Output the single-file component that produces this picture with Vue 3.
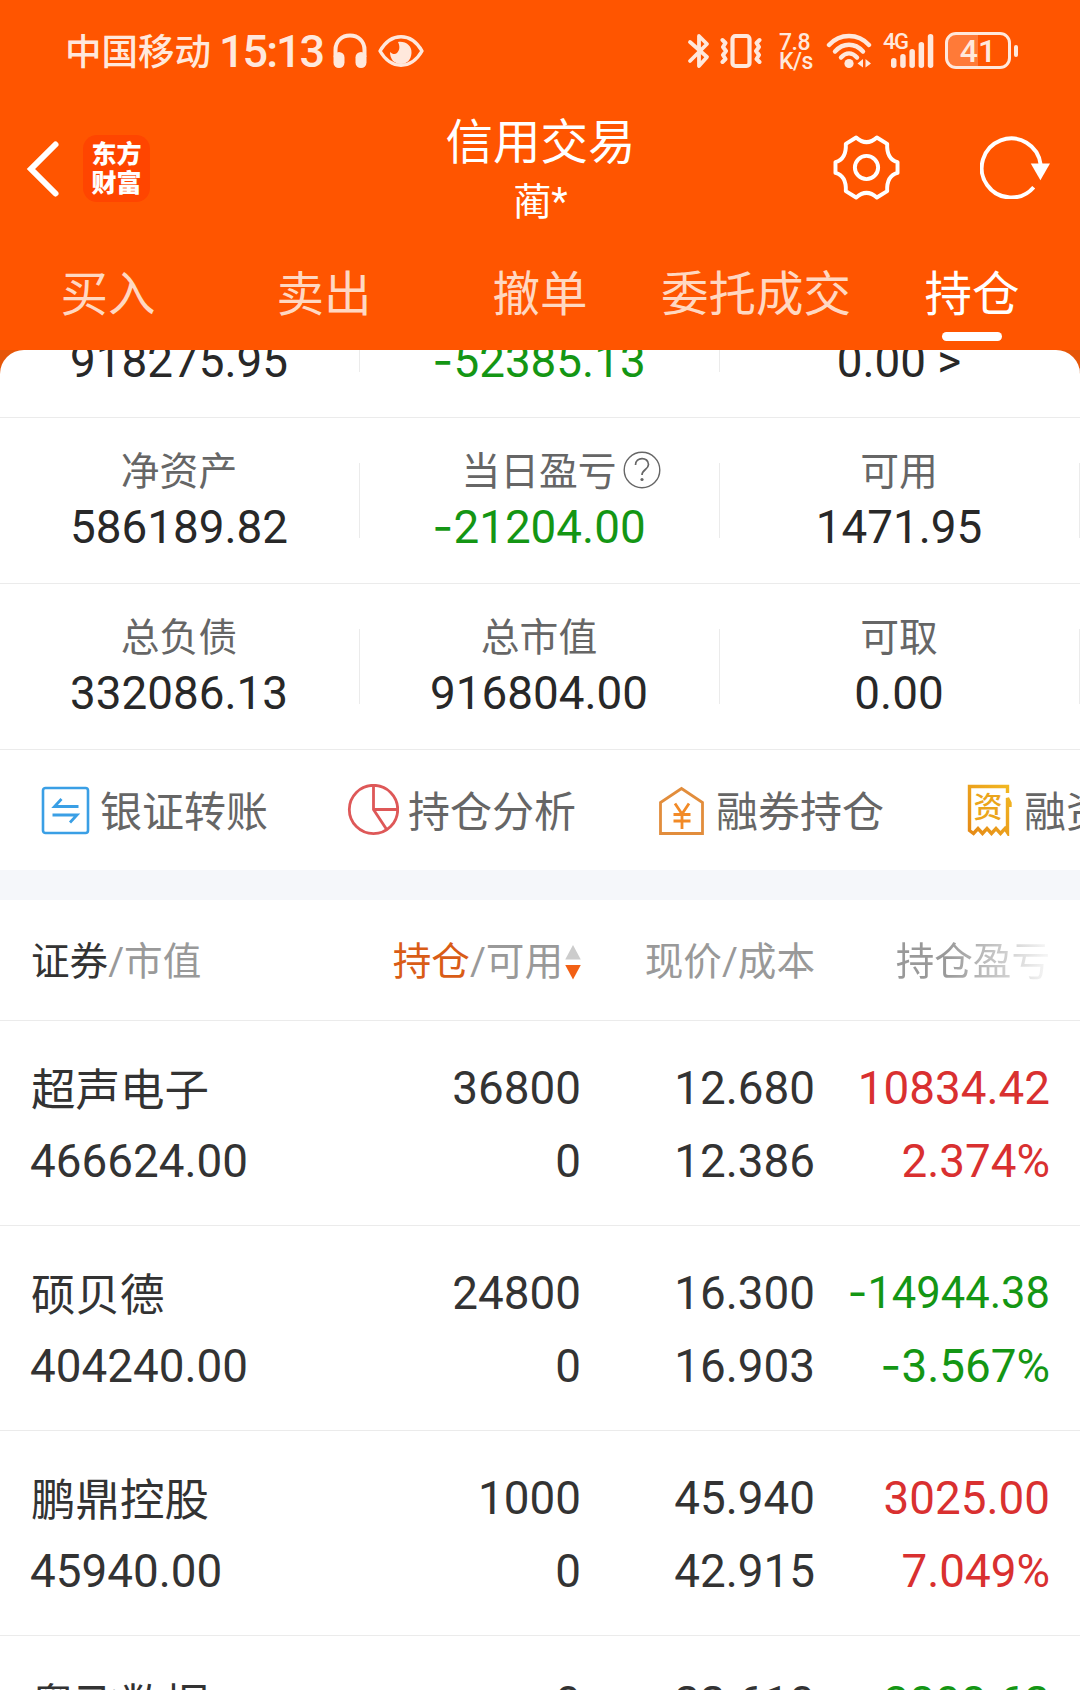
<template>
  <div class="page">
    <header class="header">
      <div class="status-bar">
        <span class="carrier">中国移动</span>
        <span class="clock">15:13</span>
        <svg class="headphones" viewBox="0 0 34 36">
          <path d="M2.500 24V17C2.500 8 9 2.500 17 2.500S31.500 8 31.500 17V24" fill="none" stroke="currentColor" stroke-width="4" />
          <rect x="0.500" y="19" width="11" height="16" rx="5.500" fill="currentColor" />
          <rect x="22.500" y="19" width="11" height="16" rx="5.500" fill="currentColor" />
        </svg>
        <svg class="eye" viewBox="0 0 46 32">
          <path d="M2 16C13 -3 33 -3 44 16C33 35 13 35 2 16Z" fill="none" stroke="currentColor" stroke-width="3.400" stroke-linejoin="round" />
          <path d="M20 7C28 6 34 11 33.500 18C33 25 29 29 23 29C16 29 12 24 12 17C14 19 17 20 19 18C22 15 22 11 20 7Z" fill="currentColor" />
        </svg>
        <div class="status-right">
          <svg class="bluetooth" viewBox="0 0 24 36">
            <path d="M3 9L20 24L12 33V3L20 11L3 28" fill="none" stroke="currentColor" stroke-width="3.800" stroke-linejoin="round" stroke-linecap="round" />
          </svg>
          <svg class="vibrate" viewBox="0 0 42 36">
            <rect x="12.500" y="3" width="17" height="30" rx="3" fill="none" stroke="currentColor" stroke-width="4.200" />
            <path d="M2.500 7L5.500 10L3 14L6 18L3 22L5.500 26L2.500 29M39.500 7L36.500 10L39 14L36 18L39 22L36.500 26L39.500 29" fill="none" stroke="currentColor" stroke-width="4" stroke-linejoin="round" stroke-linecap="round" />
          </svg>
          <span class="speed"><span>7.8</span><span>K/s</span></span>
          <svg class="wifi" viewBox="0 0 46 36">
            <g fill="none" stroke="currentColor" stroke-width="4.400" stroke-linecap="round">
              <path d="M3 12C14 0 32 0 43 12" />
              <path d="M9 18.500C17 9.500 29 9.500 37 18.500" />
              <path d="M15 24.500C20 19 26 19 31 24.500" />
            </g>
            <circle cx="23" cy="30.500" r="4.600" fill="currentColor" />
            <path d="M37 26V34.500L31.500 30.500ZM39.500 26V34.500L45 30.500Z" fill="currentColor" />
          </svg>
          <span class="signal">
            <span class="network">4G</span>
            <svg class="bars" viewBox="0 0 44 36">
              <rect x="1" y="25" width="5.500" height="10" rx="2.700" />
              <rect x="10.200" y="21" width="5.500" height="14" rx="2.700" />
              <rect x="19.400" y="16" width="5.500" height="19" rx="2.700" />
              <rect x="28.600" y="9" width="5.500" height="26" rx="2.700" />
              <rect x="37.800" y="1" width="5.500" height="34" rx="2.700" />
            </svg>
          </span>
          <span class="battery">41</span>
          <span class="battery-tip"></span>
        </div>
      </div>

      <div class="nav">
        <svg class="back" viewBox="0 0 34 58">
          <path d="M29.500 4.500L5 29L29.500 53.500" fill="none" stroke="#fff" stroke-width="6" stroke-linecap="round" stroke-linejoin="miter" />
        </svg>
        <div class="logo"><span>东方</span><span>财富</span></div>
        <div class="title">
          <h1>信用交易</h1>
          <p>蔺*</p>
        </div>
        <svg class="gear" viewBox="0 0 68 66">
          <g fill="none" stroke="#fff" stroke-width="4" stroke-linejoin="round">
            <path d="M23.500 2.500Q34 12 44.500 2.500L55 9C54.500 19 58 25.500 65.500 27.500V38.500C58 40.500 54.500 47 55 57L44.500 63.500Q34 54 23.500 63.500L13 57C13.500 47 10 40.500 2.500 38.500V27.500C10 25.500 13.500 19 13 9Z" />
            <circle cx="34" cy="33" r="11.800" />
          </g>
        </svg>
        <svg class="refresh" viewBox="0 0 72 66">
          <path d="M54.500 54A30 30 0 1 1 61.500 31" fill="none" stroke="#fff" stroke-width="4" />
          <path d="M51.500 30H71L61.300 47Z" fill="#fff" />
        </svg>
      </div>

      <nav class="tabs">
        <a v-for="tab in tabs" :key="tab" class="tab" :class="{ active: tab === activeTab }" @click="activeTab = tab">{{ tab }}</a>
      </nav>
    </header>

    <div class="sheet-wrap">
      <section class="sheet">
        <div v-for="(row, i) in assets" :key="i" class="asset-row">
          <div v-for="item in row" :key="item.value" class="asset">
            <div v-if="item.label" class="asset-label">
              <span>{{ item.label }}</span>
              <svg v-if="item.help" class="help" viewBox="0 0 38 38">
                <circle cx="19" cy="19" r="17.800" fill="none" stroke="#666" stroke-width="1.400" />
                <path d="M12.500 14C12.500 5.500 25.500 5.500 25.500 13.500C25.500 18.500 19 18.500 19 24" fill="none" stroke="#666" stroke-width="1.700" />
                <circle cx="19" cy="28.500" r="1.600" fill="#666" />
              </svg>
            </div>
            <div class="asset-value" :class="{ down: isNegative(item.value) }">
              <span v-if="isNegative(item.value)" class="minus">-</span>{{ unsigned(item.value) }}
            </div>
          </div>
        </div>
      </section>
    </div>

    <section class="actions">
      <a class="action">
        <svg viewBox="0 0 52 52">
          <rect x="4" y="4" width="45" height="45" rx="2.500" fill="none" stroke="#3a9fe5" stroke-width="2.600" />
          <path d="M39.500 22.500H15.500L22.500 15M13.500 31H38L31 38.500" fill="none" stroke="#3a9fe5" stroke-width="2.800" />
        </svg>
        <span>银证转账</span>
      </a>
      <a class="action">
        <svg viewBox="0 0 52 52">
          <g fill="none" stroke="#de5858" stroke-width="2.800">
            <circle cx="26.500" cy="25.500" r="24.200" />
            <path d="M26.500 1.500V25.500L40 46M26.500 25.500H50.500" />
          </g>
        </svg>
        <span>持仓分析</span>
      </a>
      <a class="action">
        <svg viewBox="0 0 52 52">
          <path d="M5.500 49.500V18.500L26.500 4.500L47.500 18.500V49.500Z" fill="none" stroke="#e28d3c" stroke-width="2.800" />
          <path d="M20 19.500L27 30L34 19.500M27 30V45M18.500 30.500H35.500M18.500 37H35.500" fill="none" stroke="#f28a26" stroke-width="2.800" />
        </svg>
        <span>融券持仓</span>
      </a>
      <a class="action">
        <svg viewBox="0 0 52 52">
          <defs>
            <linearGradient id="ticket" x1="1" y1="0" x2="0" y2="1">
              <stop offset="0" stop-color="#f2b822" />
              <stop offset="1" stop-color="#e58a17" />
            </linearGradient>
          </defs>
          <path d="M44.500 9V2.500H6.500V46.500L10.500 49.500L15 44.500L19.500 49.500L24 44.500L28.500 49.500L33 44.500L37.500 49.500L42 44.500L44.500 48.500V14L47 19V23" fill="none" stroke="url(#ticket)" stroke-width="3.400" />
          <text x="25" y="34" text-anchor="middle" fill="#eba51b" class="ticket-text">资</text>
        </svg>
        <span>融资持仓</span>
      </a>
    </section>

    <section class="holdings">
      <div class="holding-head">
        <span><b>证券</b>/市值</span>
        <span class="sorted">
          <b>持仓</b>/可用
          <svg class="sort" viewBox="0 0 16 36">
            <path d="M8 0L16 15H0Z" fill="#ccc" />
            <path d="M0 20.500H16L8 35.500Z" fill="#f26014" />
          </svg>
        </span>
        <span>现价/成本</span>
        <span class="faded">持仓盈亏</span>
      </div>
      <div v-for="stock in stocks" :key="stock.name" class="holding">
        <span class="name">{{ stock.name }}</span>
        <span>{{ stock.amount }}</span>
        <span>{{ stock.price }}</span>
        <span :class="[isNegative(stock.profit) ? 'down' : 'up', { long: stock.profit.length > 8 }]">
          <span v-if="isNegative(stock.profit)" class="minus">-</span>{{ unsigned(stock.profit) }}
        </span>
        <template v-if="stock.cost">
          <span>{{ stock.marketValue }}</span>
          <span>{{ stock.available }}</span>
          <span>{{ stock.cost }}</span>
          <span :class="isNegative(stock.rate) ? 'down' : 'up'">
            <span v-if="isNegative(stock.rate)" class="minus">-</span>{{ unsigned(stock.rate) }}
          </span>
        </template>
      </div>
    </section>
  </div>
</template>

<script setup>
import { ref } from 'vue';

const tabs = ['买入', '卖出', '撤单', '委托成交', '持仓'];
const activeTab = ref('持仓');

const assets = [
  [
    { value: '918275.95' },
    { value: '-52385.13' },
    { value: '0.00 >' }
  ],
  [
    { label: '净资产', value: '586189.82' },
    { label: '当日盈亏', value: '-21204.00', help: true },
    { label: '可用', value: '1471.95' }
  ],
  [
    { label: '总负债', value: '332086.13' },
    { label: '总市值', value: '916804.00' },
    { label: '可取', value: '0.00' }
  ]
];

const stocks = [
  { name: '超声电子', marketValue: '466624.00', amount: '36800', available: '0', price: '12.680', cost: '12.386', profit: '10834.42', rate: '2.374%' },
  { name: '硕贝德', marketValue: '404240.00', amount: '24800', available: '0', price: '16.300', cost: '16.903', profit: '-14944.38', rate: '-3.567%' },
  { name: '鹏鼎控股', marketValue: '45940.00', amount: '1000', available: '0', price: '45.940', cost: '42.915', profit: '3025.00', rate: '7.049%' },
  { name: '粤飞数据', amount: '0', price: '22.610', profit: '-3808.62' }
];

const isNegative = (value) => value.startsWith('-');
const unsigned = (value) => value.replace('-', '');
</script>

<style>
body {
  margin: 0;
  background: #fff;
}
</style>

<style scoped>
.page {
  width: 1080px;
  height: 1690px;
  overflow: hidden;
  background: #fff;
  color: #333;
  font-family: Roboto, "Noto Sans CJK SC", sans-serif;
  font-size: 45.8px;
}

svg {
  display: block;
  flex: none;
}

.header {
  height: 350px;
  background: #ff5500;
  color: #fff;
}

.status-bar {
  display: flex;
  align-items: center;
  height: 101px;
  padding: 0 62px 0 65px;
  box-sizing: border-box;
  color: #ffe8dc;
}

.carrier {
  width: 154px;
  padding-bottom: 3px;
  font-size: 36.5px;
  font-weight: 500;
  white-space: nowrap;
}

.clock {
  width: 114px;
  padding-top: 1px;
  font-size: 45px;
  font-weight: 500;
  letter-spacing: -2px;
}

.headphones {
  width: 34px;
  height: 36px;
}

.eye {
  width: 46px;
  height: 32px;
  margin-left: 11px;
}

.status-right {
  display: flex;
  align-items: center;
  margin-left: auto;
}

.bluetooth {
  width: 24px;
  height: 36px;
}

.vibrate {
  width: 42px;
  height: 36px;
  margin-left: 9px;
}

.speed {
  display: flex;
  flex-direction: column;
  width: 34px;
  margin-left: 17px;
  padding-top: 3px;
  font-size: 23px;
  font-weight: 500;
  line-height: 19px;
  letter-spacing: -0.5px;
  white-space: nowrap;
}

.wifi {
  width: 46px;
  height: 36px;
  margin-left: 13px;
}

.signal {
  position: relative;
  margin-left: 18px;
}

.network {
  position: absolute;
  left: -7px;
  top: -3px;
  font-size: 22px;
  font-weight: 500;
  line-height: 24px;
  letter-spacing: -1.5px;
}

.bars {
  width: 44px;
  height: 36px;
  fill: currentColor;
}

.battery {
  width: 66px;
  height: 37px;
  margin-left: 11px;
  box-sizing: border-box;
  border: 3px solid currentColor;
  border-radius: 11px;
  background: linear-gradient(to right, #ff7a38 50%, transparent 50%);
  font-size: 32px;
  font-weight: 500;
  line-height: 33px;
  text-align: center;
}

.battery-tip {
  width: 4px;
  height: 12px;
  margin-left: 3px;
  border-radius: 2px;
  background: currentColor;
}

.nav {
  display: flex;
  align-items: center;
  height: 135px;
  padding: 0 29px 0 26px;
}

.back {
  width: 34px;
  height: 58px;
}

.logo {
  display: flex;
  flex-direction: column;
  align-items: center;
  justify-content: center;
  width: 67px;
  height: 67px;
  margin-left: 23px;
  border-radius: 14px;
  background: #ff4500;
  font-size: 25px;
  font-weight: 900;
  line-height: 29px;
}

.title {
  flex: 1;
  margin-left: 99px;
  padding: 7px 1px 0 0;
  text-align: center;
}

.title h1 {
  margin: 0;
  font-size: 47.5px;
  font-weight: 400;
  line-height: 60px;
}

.title p {
  margin: 0;
  font-size: 38px;
  line-height: 58px;
}

.gear {
  width: 67px;
  height: 65px;
  margin-bottom: 2px;
}

.refresh {
  width: 71px;
  height: 65px;
  margin-left: 80px;
  margin-bottom: 4px;
}

.tabs {
  display: grid;
  grid-template-columns: repeat(5, 216px);
  height: 114px;
}

.tab {
  display: flex;
  flex-direction: column;
  align-items: center;
  padding-top: 27px;
  font-size: 47.5px;
  line-height: 64px;
  white-space: nowrap;
  color: #ffd8c2;
}

.tab.active {
  color: #fff;
}

.tab.active::after {
  content: "";
  width: 60px;
  height: 9px;
  margin-top: 5px;
  border-radius: 5px;
  background: #fff;
}

.sheet-wrap {
  background: linear-gradient(#e65608 24px, #fff 24px);
}

/* scrolled, so the top row is cut by the header */
.sheet {
  display: flex;
  flex-direction: column;
  justify-content: flex-end;
  height: 400px;
  overflow: hidden;
  border-radius: 24px 24px 0 0;
  background: #fff;
}

.asset-row {
  display: grid;
  flex: none;
  grid-template-columns: repeat(3, 360px);
  height: 166px;
  box-sizing: border-box;
  border-bottom: 1px solid #ebebeb;
}

.asset {
  display: flex;
  flex-direction: column;
  justify-content: flex-end;
  padding: 0 2px 25px 0;
  text-align: center;
  background: linear-gradient(#ebebeb, #ebebeb) right 45px / 1px 75px no-repeat;
}

.asset-label {
  position: relative;
  font-size: 38.8px;
  line-height: 54px;
  padding-top: 1px;
  margin-bottom: -1px;
  color: #666;
}

.help {
  position: absolute;
  left: 263px;
  top: 7px;
  width: 38px;
  height: 38px;
}

.asset-value {
  line-height: 60px;
  color: #282828;
}

.minus {
  font-family: Inter, sans-serif;
  line-height: 1;
}

.asset-value.down,
.down {
  color: #149614;
}

.up {
  color: #d93030;
}

.actions {
  display: flex;
  height: 120px;
  padding-left: 39px;
  overflow: hidden;
  border-bottom: 30px solid #f5f7fa;
}

.action {
  display: flex;
  flex: none;
  align-items: center;
  gap: 9px;
  width: 308px;
  font-size: 42px;
  white-space: nowrap;
  color: #666;
}

.action > span {
  padding-bottom: 4px;
}

.action svg {
  width: 52px;
  height: 52px;
}

.ticket-text {
  font-size: 29px;
  font-weight: 500;
}

.holding-head,
.holding {
  display: grid;
  grid-template-columns: 250px 300px 234px 235px;
  padding: 0 30px 0 31px;
  box-sizing: border-box;
  border-bottom: 1px solid #ebebeb;
  text-align: right;
  white-space: nowrap;
}

.holding-head {
  height: 121px;
  line-height: 124px;
  font-size: 38.6px;
  color: #999;
}

.holding-head > :first-child,
.holding > :nth-child(4n + 1) {
  text-align: left;
}

.holding > :nth-child(4n + 1) {
  margin-left: -1px;
}

.holding-head b {
  font-weight: 400;
  color: #333;
}

.sorted {
  display: flex;
  align-items: center;
  justify-content: flex-end;
}

.holding-head .sorted b {
  color: #d95c16;
}

.sort {
  width: 16px;
  height: 35px;
  margin-left: 2px;
}

.faded {
  color: transparent;
  background: linear-gradient(to right, #999 56%, #c8c8c8 78%, #f4f4f4 98%);
  background-clip: text;
}

.holding {
  grid-auto-rows: 73px;
  align-content: start;
  height: 205px;
  padding-top: 31px;
  line-height: 73px;
}

.holding > .name {
  margin-left: 0;
  padding-top: 3px;
  font-size: 44.5px;
}

.long {
  font-size: 43.5px;
}
</style>
